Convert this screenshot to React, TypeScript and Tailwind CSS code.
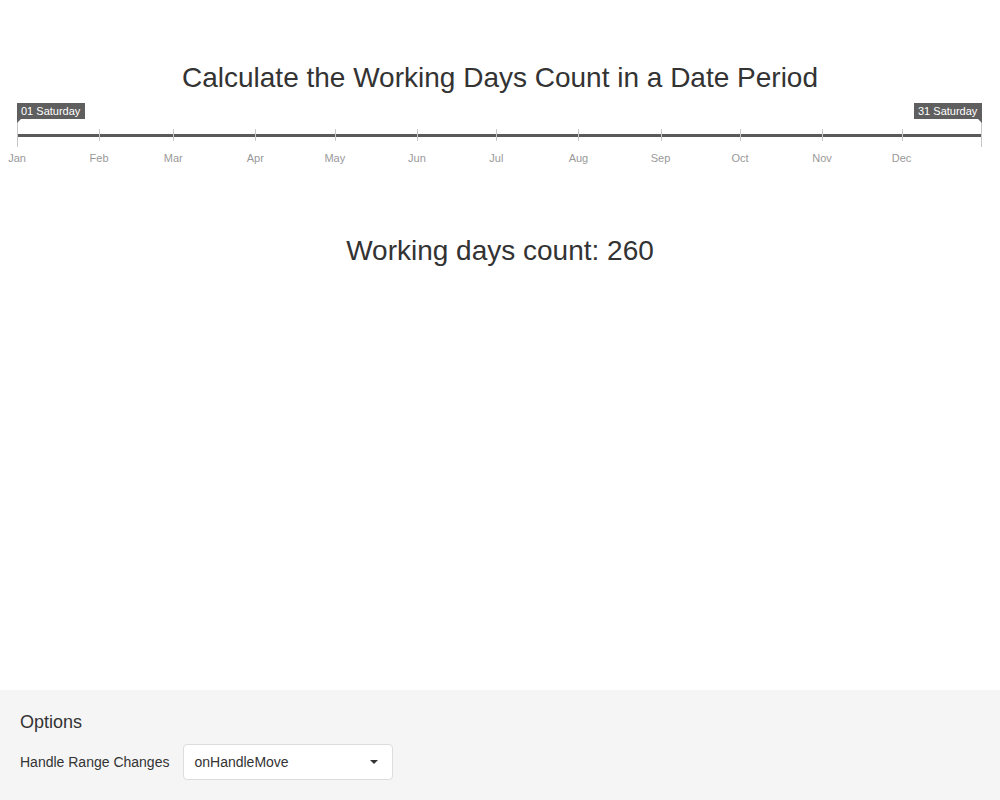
import React from 'react'

const months = ["Jan", "Feb", "Mar", "Apr", "May", "Jun", "Jul", "Aug", "Sep", "Oct", "Nov", "Dec"]
const monthDays = [31, 28, 31, 30, 31, 30, 31, 31, 30, 31, 30, 31]

const LEFT = 17
const RIGHT = 981
// Jan 1 .. Dec 31 => 364 day span
const perDay = (RIGHT - LEFT) / 364

// day offsets for each month start
const offsets = monthDays.reduce<number[]>((acc, d, i) => {
    acc.push(i === 0 ? 0 : acc[i - 1] + monthDays[i - 1])
    return acc
}, [])

const RangeScale = () => {
    return (
        <svg width={1000} height={70} className="block">
            {/* track */}
            <rect x={LEFT} y={34} width={RIGHT - LEFT} height={3} fill="#5a5a5a" />
            {/* ticks */}
            {offsets.map((o, i) => {
                const x = Math.round(LEFT + o * perDay) + 0.5
                return <line key={i} x1={x} x2={x} y1={29} y2={41} stroke="#c8c8c8" strokeWidth={1} />
            })}
            {offsets.map((o, i) => (
                <text key={months[i]} x={LEFT + o * perDay} y={62} textAnchor="middle" fontSize={11} fill="#999" fontFamily="'Liberation Sans', Arial, sans-serif">
                    {months[i]}
                </text>
            ))}
            {/* start handle */}
            <line x1={17.5} x2={17.5} y1={19} y2={47} stroke="#c8c8c8" strokeWidth={1} />
            <rect x={17} y={3} width={68} height={16} fill="#5f5f5f" />
            <polygon points="17,19 21,19 17,23" fill="#5f5f5f" />
            <text x={21} y={15} fontSize={11} fill="#fff" fontFamily="'Liberation Sans', Arial, sans-serif">01 Saturday</text>
            {/* end handle */}
            <line x1={981.5} x2={981.5} y1={19} y2={47} stroke="#c8c8c8" strokeWidth={1} />
            <rect x={914} y={3} width={68} height={16} fill="#5f5f5f" />
            <polygon points="982,19 978,19 982,23" fill="#5f5f5f" />
            <text x={918} y={15} fontSize={11} fill="#fff" fontFamily="'Liberation Sans', Arial, sans-serif">31 Saturday</text>
        </svg>
    )
}

export default function App() {
    return (
        <div className="w-[1000px] h-[800px] flex flex-col bg-white text-[#333] font-['Liberation_Sans',Arial,sans-serif]">
            <div className="flex-1">
                <h1 className="pt-[61px] text-center text-[28px] leading-[34px]">Calculate the Working Days Count in a Date Period</h1>
                <div className="mt-[5px]">
                    <RangeScale />
                </div>
                <p className="mt-[64px] text-center text-[28px] leading-[34px]">Working days count: 260</p>
            </div>
            <div className="h-[110px] bg-[#f5f5f5] px-5 pt-[20px]">
                <div className="text-[18px] leading-[24px]">Options</div>
                <div className="mt-[10px] flex items-center gap-[14px]">
                    <span className="text-[14px]">Handle Range Changes</span>
                    <div className="w-[210px] h-[36px] bg-white border border-[#ddd] rounded-[4px] flex items-center justify-between pl-[10px] pr-[14px]">
                        <span className="text-[14px]">onHandleMove</span>
                        <svg width={8} height={4} viewBox="0 0 8 4"><polygon points="0,0 8,0 4,4" fill="#333" /></svg>
                    </div>
                </div>
            </div>
        </div>
    )
}
